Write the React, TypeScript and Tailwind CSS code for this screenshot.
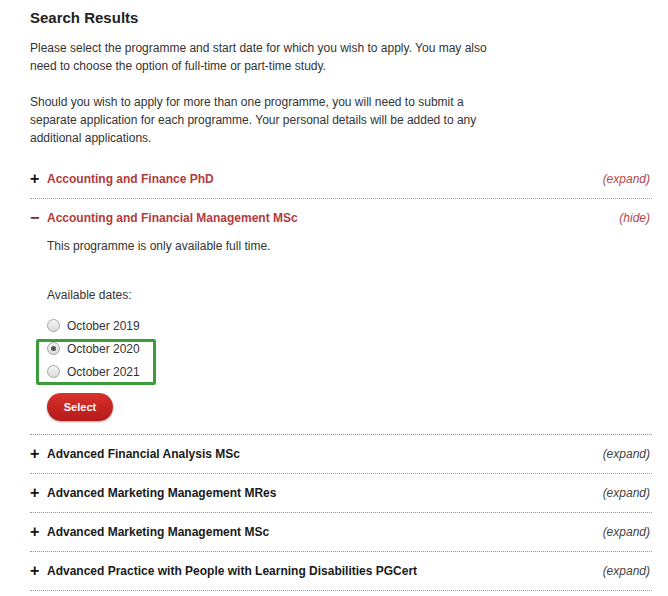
import React from "react";

const font = { fontFamily: '"Liberation Sans", Arial, sans-serif' };

function Radio({ checked }: { checked?: boolean }) {
  return (
    <span className="relative inline-flex h-[13px] w-[13px] items-center justify-center rounded-full border border-[#a6a6a6] bg-gradient-to-b from-[#f4f4f4] to-[#dcdcdc]">
      {checked && <span className="h-[5px] w-[5px] rounded-full bg-[#555]" />}
    </span>
  );
}

function Row({ title, red, last }: { title: string; red?: boolean; last?: boolean }) {
  return (
    <div className="flex h-[39px] items-center justify-between border-b border-dotted border-[#9a9a9a]">
      <div className="flex items-center">
        <span className="w-[17px] text-[16px] font-bold leading-none text-[#111]">+</span>
        <span className={`text-[12px] font-bold ${red ? "text-[#b23b3b]" : "text-[#1a1a1a]"}`}>{title}</span>
      </div>
      <span className={`pr-[2px] text-[12px] italic ${red ? "text-[#b0484a]" : "text-[#444]"}`}>(expand)</span>
    </div>
  );
}

export default function App() {
  return (
    <div className="min-h-[596px] w-[668px] bg-white" style={font}>
      <div className="w-[652px] pl-[30px] pt-[9px]">
        <h1 className="text-[15px] font-bold leading-[18px] text-[#222]">Search Results</h1>
        <p className="mt-[12px] w-[470px] text-[12px] leading-[18px] text-[#333]">
          Please select the programme and start date for which you wish to apply. You may also need to choose the option of full-time or part-time study.
        </p>
        <p className="mt-[18px] w-[470px] text-[12px] leading-[18px] text-[#333]">
          Should you wish to apply for more than one programme, you will need to submit a separate application for each programme. Your personal details will be added to any additional applications.
        </p>
        <div className="mt-[13px]">
          <Row title="Accounting and Finance PhD" red />
          <div className="border-b border-dotted border-[#9a9a9a]">
            <div className="flex h-[38px] items-center justify-between">
              <div className="flex items-center">
                <span className="w-[17px] text-[16px] font-bold leading-none text-[#7a2a2a]">−</span>
                <span className="text-[12px] font-bold text-[#b23b3b]">Accounting and Financial Management MSc</span>
              </div>
              <span className="pr-[2px] text-[12px] italic text-[#b0484a]">(hide)</span>
            </div>
            <div className="pl-[17px] pb-[13px] text-[12px] text-[#333]">
              <p className="leading-[18px]">This programme is only available full time.</p>
              <p className="mt-[31px] leading-[18px]">Available dates:</p>
              <div className="relative mt-[10px]">
                <label className="flex h-[23px] items-center gap-[7px]">
                  <Radio />
                  <span>October 2019</span>
                </label>
                <label className="flex h-[23px] items-center gap-[7px]">
                  <Radio checked />
                  <span>October 2020</span>
                </label>
                <label className="flex h-[23px] items-center gap-[7px]">
                  <Radio />
                  <span>October 2021</span>
                </label>
                <div className="pointer-events-none absolute left-[-11px] top-[25px] h-[46px] w-[120px] rounded-[2px] border-[3px] border-[#3c9c3c]" />
              </div>
              <button className="mt-[10px] h-[28px] w-[66px] rounded-full bg-gradient-to-b from-[#d9302c] to-[#b41a18] text-[11px] font-bold text-white shadow-[0_1px_2px_rgba(0,0,0,0.35)]">
                Select
              </button>
            </div>
          </div>
          <Row title="Advanced Financial Analysis MSc" />
          <Row title="Advanced Marketing Management MRes" />
          <Row title="Advanced Marketing Management MSc" />
          <Row title="Advanced Practice with People with Learning Disabilities PGCert" />
        </div>
      </div>
    </div>
  );
}
